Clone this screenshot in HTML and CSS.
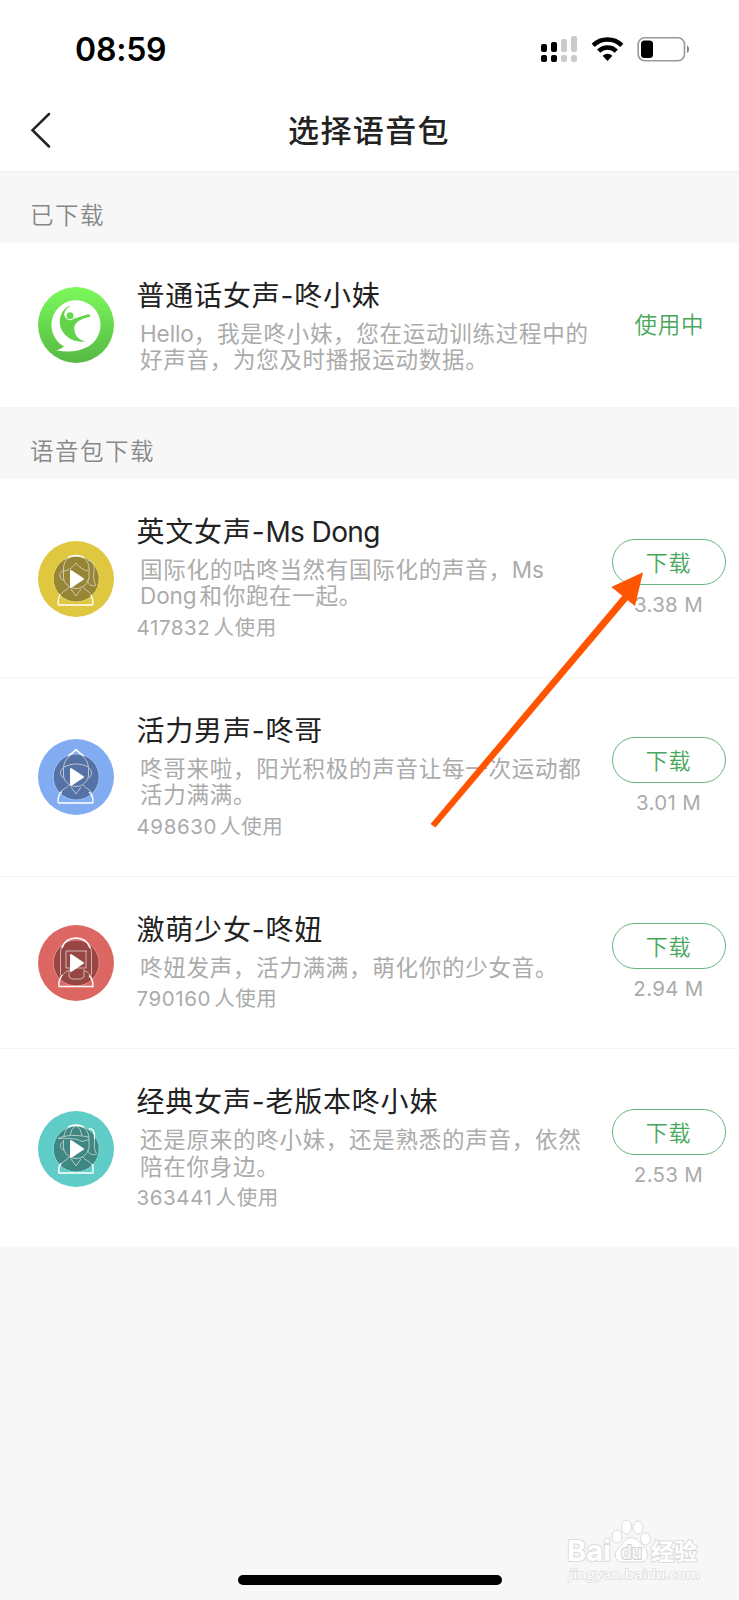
FILE: index.html
```html
<!DOCTYPE html>
<html lang="zh-CN">
<head>
<meta charset="utf-8">
<title>选择语音包</title>
<link rel="stylesheet" href="styles.css">
</head>
<body>
<div class="screen">
  <div class="status">
    <span class="time">08:59</span>
    <svg class="status-icons" viewBox="0 0 152 30" width="152" height="30">
      <g><rect x="1" y="10" width="6" height="8" rx="2"/><rect x="1" y="21" width="6" height="7" rx="2"/><rect x="11" y="8" width="6" height="10" rx="2"/><rect x="11" y="21" width="6" height="7" rx="2"/></g>
      <g fill="#cbcbcb"><rect x="21" y="5" width="6" height="13" rx="2"/><rect x="21" y="21" width="6" height="7" rx="2"/><rect x="31" y="2" width="6" height="16" rx="2"/><rect x="31" y="21" width="6" height="7" rx="2"/></g>
      <g fill="none" stroke="#000" stroke-width="4.500"><path d="M53.2 11.3a20.5 20.5 0 0 1 28.6 0"/><path d="M58.7 17.2a12.5 12.5 0 0 1 17.6 0"/></g>
      <path d="M62.6 21.8a7 7 0 0 1 9.8 0L67.5 27z"/>
      <rect x="98.2" y="3.8" width="46.3" height="23" rx="6.5" fill="#fff" stroke="#999" stroke-width="1.6"/>
      <rect x="101" y="6.5" width="12" height="17.5" rx="3.5"/>
      <path d="M147 11.5c2.8 1 2.8 6.500 0 7.500z" fill="#888"/>
    </svg>
  </div>
  <div class="nav">
    <svg class="back" viewBox="0 0 22 38" width="22" height="38"><path d="M19 3 2.500 19.200 19 35.500" fill="none" stroke="#222" stroke-width="2.500" stroke-linecap="round"/></svg>
    <h1 class="nav-title">选择语音包</h1>
  </div>

  <h2 class="section">已下载</h2>
  <div class="row current">
    <svg class="avatar" viewBox="0 0 76 76">
      <defs><linearGradient id="lime" x1="0" y1="0" x2="0" y2="1"><stop offset="0" stop-color="#7bfa5c"/><stop offset="1" stop-color="#55b843"/></linearGradient></defs>
      <circle cx="38" cy="38" r="38" fill="url(#lime)"/>
      <path d="M38 13.300a24.700 24.700 0 0 1 10 47.200C40 65 29 65.500 18.300 63.300c3.500-1 6.200-2.500 7.700-3.800A24.700 24.700 0 0 1 38 13.300z" fill="#fff"/>
      <path d="M31.500 18.800C24 22 20 31 22.500 40c3 9.500 13 15.800 25 14.600-7-1.600-11-6.500-11.200-12.800-.1-4.500 3.300-8.300 10.200-10.500 2.200-.7 5-1 5.500-2 .5-1.100-.3-2.100-2-2L34 32.300c-4-.2-7.500-1.600-7.700-4.300-.1-3.200 2-6.600 5.600-8.400z" fill="#62d34b"/>
      <circle cx="32" cy="28.700" r="4.600" fill="#fff"/><circle cx="32" cy="28.700" r="3.500" fill="#65da4e"/>
    </svg>
    <div class="info">
      <h3>普通话女声-咚小妹</h3>
      <p class="desc"><span class="latin">Hello</span>，我是咚小妹，您在运动训练过程中的<br>好声音，为您及时播报运动数据。</p>
    </div>
    <div class="using">使用中</div>
  </div>

  <h2 class="section">语音包下载</h2>
  <div class="row">
    <svg class="avatar" viewBox="0 0 76 76">
      <circle cx="38" cy="38" r="38" fill="#dfc740"/><circle cx="38.200" cy="38" r="23" fill="#958534" stroke="#e9d765" stroke-width="1"/>
      <g class="line"><path d="M25.500 28C25.500 19 31 15 38 15s13 4 13 13v8c0 6-6 11.500-13 11.500S25.500 42 25.500 36z"/><path d="M25.500 30c-5 0-5 9 .5 9M26 30c6-1 9-4 12-8 3 4 7 7 12.500 8M50 20c4-3 7 4 6 10-1 7 0 11 2 14-3 2-8 0-9-5M31 46c-3 5-10 4-11 15M45 46c3 5 10 4 10 15M33 48l5 7 5-7"/></g>
      <path class="shirt" d="M22 53.500c-2 4-2 7-2 9.500q0 1 1 1h33q1 0 1-1c0-3 0-5-2-9M30 16.500q8-4 16 0"/>
      <path class="play" d="M33 30v16l12-8z"/>
    </svg>
    <div class="info">
      <h3>英文女声-<span class="latin">Ms Dong</span></h3>
      <p class="desc">国际化的咕咚当然有国际化的声音，<span class="latin">Ms</span><br><span class="latin">Dong</span><span class="hair"></span>和你跑在一起。</p>
      <p class="count">417832<span class="hair"></span>人使用</p>
    </div>
    <div class="action"><button>下载</button><span>3.38 M</span></div>
  </div>

  <div class="row">
    <svg class="avatar" viewBox="0 0 76 76">
      <circle cx="38" cy="38" r="38" fill="#82acf1"/><circle cx="38.200" cy="38" r="23" fill="#5472a6" stroke="#9dc0fa" stroke-width="1"/>
      <g class="line"><path d="M25.500 29C26 19 34 16 38 11c4 5 12 8 12.500 18v7c0 6-6 11.500-12.500 11.500S25.500 42 25.500 36z"/><path d="M26 28c8-4 16-4 24.500 0M25.500 29c-4 1-4 9 .5 10M50.500 29c4 1 4 9 0 10M31 46c-3 5-10 3-11 15M45 46c3 5 10 3 10 15M33 48l5 7 5-7"/></g>
      <path class="shirt" d="M24 52.500c-4 3-4 7-4 10.500q0 1 1 1h33q1 0 1-1c0-3 0-7-4-10M30 17c3-2 6-4 8-6.500 2 2.500 5 4.500 8 6.500"/>
      <path class="play" d="M33 30v16l12-8z"/>
    </svg>
    <div class="info">
      <h3>活力男声-咚哥</h3>
      <p class="desc">咚哥来啦，阳光积极的声音让每一次运动都<br>活力满满。</p>
      <p class="count">498630<span class="hair"></span>人使用</p>
    </div>
    <div class="action"><button>下载</button><span>3.01 M</span></div>
  </div>

  <div class="row">
    <svg class="avatar" viewBox="0 0 76 76">
      <circle cx="38" cy="38" r="38" fill="#dc6762"/><circle cx="38.200" cy="38" r="23" fill="#984643" stroke="#ee8a86" stroke-width="1"/>
      <g class="line"><path d="M22.500 50V28c0-9 7-14.500 15.500-14.500S53.500 19 53.500 28v22M28 26h21M28 26v17h20V26M31 46v6l3 2h9l3-2v-6M32 45c-4 1-10 5-11 15M45 45c4 1 10 5 10 15"/></g>
      <path class="shirt" d="M24 50c-2 3-4 8-3 11.500h34c0-4-1-8-4-11M24 23c2-6 7-10 14-10s12 4 14 10"/>
      <path class="play" d="M33 30v16l12-8z"/>
    </svg>
    <div class="info">
      <h3>激萌少女-咚妞</h3>
      <p class="desc">咚妞发声，活力满满，萌化你的少女音。</p>
      <p class="count">790160<span class="hair"></span>人使用</p>
    </div>
    <div class="action"><button>下载</button><span>2.94 M</span></div>
  </div>

  <div class="row last">
    <svg class="avatar" viewBox="0 0 76 76">
      <circle cx="38" cy="38" r="38" fill="#5fccc7"/><circle cx="38.200" cy="38" r="23" fill="#3f8783" stroke="#80dcd7" stroke-width="1"/>
      <g class="line"><path d="M26 26c0-7 5-11.500 12-11.500S51 19 51 28v8c0 6-6 11.500-13 11.500S25.500 42 25.500 36v-7"/><path d="M20 27.500c7-3.500 18-4 31-1.500M20 27.500c11-.5 19 0 24 3l7-2M25 31c-4 1-3 8 1 8M50 18c6-2 7 5 6.500 12-.5 6 0 9 2 13-3 2-8 0-9-4M31 46c-3 5-9 3-10 15M45 46c3 5 10 3 10 15M33 48l5 7 5-7M38 14.500q-5 3-6 10M38 14.500q5 3 6 10"/></g>
      <path class="shirt" d="M23 52c-2 3-3 7-2 10h34v-9M30 16q8-4 16 0M51 18c5-1 6 4 5.500 10"/>
      <path class="play" d="M33 30v16l12-8z"/>
    </svg>
    <div class="info">
      <h3>经典女声-老版本咚小妹</h3>
      <p class="desc">还是原来的咚小妹，还是熟悉的声音，依然<br>陪在你身边。</p>
      <p class="count">363441<span class="hair"></span>人使用</p>
    </div>
    <div class="action"><button>下载</button><span>2.53 M</span></div>
  </div>

  <svg class="pointer" viewBox="0 0 214 257" width="214" height="257"><path d="M0.500 252 192.300 23.800 181.300 15 213 0.300 205 34 197.700 28.200 5.500 255.500z" fill="#ff5500"/></svg>

  <svg class="watermark" viewBox="0 0 140 70" width="140" height="70">
    <g fill="#fff" stroke="#dcdcdc" stroke-width="1">
      <ellipse cx="55" cy="19.500" rx="5" ry="6.500"/><ellipse cx="64.500" cy="10" rx="5" ry="7"/><ellipse cx="76" cy="10.500" rx="5" ry="6.500"/><ellipse cx="83.500" cy="22" rx="5" ry="6"/>
      <path d="M69 20.500c-6 0-7 5-11 9-7 6-6 14.500 2 15.500 6 .5 12-.5 18 0 9 0 10-9 4-15-5-4.500-7-9.500-13-9.500z"/>
      <g class="wm-text"><text x="5" y="44" font-size="28" textLength="44" lengthAdjust="spacingAndGlyphs">Bai</text><text x="89" y="43" font-size="23" textLength="46">经验</text></g>
      <text class="wm-text du" x="59" y="41.500" font-size="19" textLength="21" lengthAdjust="spacingAndGlyphs">du</text>
    </g>
    <text class="wm-url" x="7" y="62" font-size="13" textLength="131" lengthAdjust="spacingAndGlyphs">jingyan.baidu.com</text>
  </svg>
  <div class="home"></div>
</div>
</body>
</html>
```

FILE: styles.css
```css
* { box-sizing: border-box; }
body, h1, h2, h3, p { margin: 0; font-weight: 400; }
body {
  background: #f7f7f7;
  font-family: Inter, "Noto Sans CJK SC", sans-serif;
  color: #222;
}
.screen {
  position: relative;
  width: 739px;
  height: 1600px;
  overflow: hidden;
}
.status {
  height: 96px;
  background: #fff;
  display: flex;
  justify-content: space-between;
  padding: 34px 47px 0 75px;
}
.time {
  font-size: 32px;
  line-height: 32px;
  font-weight: 600;
  letter-spacing: -0.200px;
  color: #000;
}
.nav {
  height: 76px;
  background: #fff;
  border-bottom: 1px solid #f0f0f0;
  display: flex;
  align-items: flex-start;
  padding-left: 30px;
}
.back { margin-top: 15px; }
.nav-title {
  flex: 1;
  padding: 13px 53px 0 0;
  text-align: center;
  font-size: 31px;
  line-height: 44px;
  font-weight: 500;
  letter-spacing: 1.400px;
}
.section {
  height: 71px;
  padding: 26px 0 0 30px;
  font-size: 23.500px;
  line-height: 36px;
  font-weight: 350;
  letter-spacing: 1.500px;
  color: #888;
}
.row {
  display: flex;
  background: #fff;
  padding: 34px 0 34.900px 37.500px;
  border-bottom: 1px solid #f5f5f5;
}
.current {
  height: 165px;
  padding-bottom: 0;
}
.current + .section {
  height: 71px;
  padding-top: 26px;
}
.last { border-bottom: 0; }
.avatar {
  width: 76px;
  height: 76px;
  align-self: center;
  flex: none;
  margin-top: 2px;
}
.current .avatar { align-self: flex-start; margin-top: 10px; }
.line { fill: none; stroke: #e4e4dc; stroke-width: 0.9; opacity: 0.8; }
.shirt { fill: none; stroke: #fff; stroke-width: 1.3; }
.play { fill: #fff; stroke: #fff; stroke-width: 2; stroke-linejoin: round; }
.info {
  width: 475px;
  padding-left: 23px;
  flex: none;
  white-space: nowrap;
}
h3 {
  font-size: 28px;
  line-height: 38px;
  letter-spacing: 0.800px;
  font-weight: 390;
}
h3 .latin { letter-spacing: -0.600px; }
.desc {
  margin-top: 5.700px;
  padding-left: 3.500px;
  font-size: 22.500px;
  line-height: 26.600px;
  letter-spacing: 0.730px;
  font-weight: 390;
  color: #ababab;
}
.desc .latin { letter-spacing: -0.100px; }
.count {
  margin-top: 4.200px;
  font-size: 20.500px;
  line-height: 28px;
  letter-spacing: 0.600px;
  font-weight: 390;
  color: #ababab;
}
.hair { display: inline-block; width: 3px; }
.action {
  width: 114px;
  margin: 2px 0 0 23px;
  align-self: center;
  display: flex;
  flex-direction: column;
  gap: 6px;
  text-align: center;
}
.action button {
  height: 46px;
  padding: 0 0 2px;
  border: 1.500px solid #68b47b;
  border-radius: 23px;
  background: #fff;
  color: #48a75a;
  font: 350 22px Inter, "Noto Sans CJK SC", sans-serif;
  letter-spacing: 0.800px;
}
.action span {
  font-size: 20.500px;
  line-height: 28px;
  letter-spacing: 0.300px;
  font-weight: 390;
  color: #ababab;
}
.using {
  margin: 30px 0 0 46px;
  font-size: 22.500px;
  line-height: 36px;
  letter-spacing: 0.700px;
  font-weight: 350;
  color: #48a75a;
}
.pointer { position: absolute; left: 430px; top: 572px; }
.watermark { position: absolute; left: 562px; top: 1517px; }
.wm-text {
  font-family: Inter, "Noto Sans CJK SC", sans-serif;
  font-weight: 700;
  paint-order: stroke;
  stroke-width: 2px;
}
.du { fill: #f7f7f7; stroke: #cfcfcf; }
.wm-url {
  font-family: "Open Sans", sans-serif;
  font-weight: 600;
  fill: #fcfcfc;
  stroke: #dfdfdf;
  stroke-width: 1.500px;
  paint-order: stroke;
}
.home {
  position: absolute;
  left: 238px;
  top: 1575px;
  width: 264px;
  height: 10px;
  border-radius: 5px;
  background: #000;
}
```
